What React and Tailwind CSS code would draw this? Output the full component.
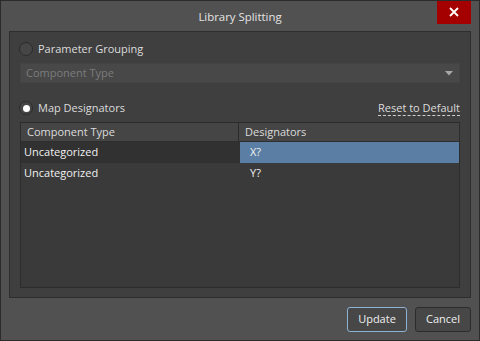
import React from "react";

const font = { fontFamily: '"Open Sans", "Noto Sans", "DejaVu Sans", sans-serif' };

function Radio({ checked }) {
  return (
    <div className="w-[14px] h-[14px] rounded-full border border-[#2c2c2c] bg-[#464646] flex items-center justify-center shrink-0">
      {checked && <div className="w-[7px] h-[7px] rounded-full bg-white" />}
    </div>
  );
}

export default function App() {
  return (
    <div
      className="w-[480px] h-[341px] bg-[#515151] border border-[#2b2b2b] flex flex-col text-[11px] text-[#dcdcdc] overflow-hidden"
      style={font}
    >
      <div className="relative h-[30px] shrink-0 flex items-center justify-center">
        <span className="text-[11.4px] text-[#e4e4e4] mt-[1px]">Library Splitting</span>
        <div className="absolute right-[8px] top-[-1px] w-[34px] h-[24px] bg-[#a50000] flex items-center justify-center">
          <svg width="10" height="10" viewBox="0 0 10 10">
            <path d="M1 1 L9 9 M9 1 L1 9" stroke="#fff" strokeWidth="1.8" />
          </svg>
        </div>
      </div>

      <div className="mx-[8px] h-[267px] border border-[#2e2e2e] bg-[#3f3f3f] flex flex-col px-[10px] shrink-0">
        <div className="h-[20px] mt-[7px] flex items-center gap-[5px] ml-[-1px]">
          <Radio />
          <span>Parameter Grouping</span>
        </div>
        <div className="mt-[4px] h-[20px] bg-[#484848] border border-[#444] rounded-[1px] flex items-center justify-between px-[5px] text-[#7c7c7c]">
          <span>Component Type</span>
          <svg width="8" height="5" viewBox="0 0 8 5" className="mr-[1px]">
            <path d="M0 0 L8 0 L4 4.5 Z" fill="#a8a8a8" />
          </svg>
        </div>
        <div className="mt-[15px] h-[20px] flex items-center justify-between">
          <div className="flex items-center gap-[5px] ml-[-1px]">
            <Radio checked />
            <span>Map Designators</span>
          </div>
          <span className="border-b border-dashed border-[#cfcfcf] leading-[14px] mt-[1px]">Reset to Default</span>
        </div>
        <div className="mt-[4px] h-[166px] border border-[#2c2c2c] bg-[#3a3a3a] flex flex-col">
          <div className="h-[19px] bg-[#454545] border-b border-[#2e2e2e] flex shrink-0">
            <div className="w-[218px] border-r border-[#2a2a2a] flex items-center pl-[6px]">Component Type</div>
            <div className="flex-1 flex items-center pl-[6px]">Designators</div>
          </div>
          <div className="h-[21px] flex">
            <div className="w-[219px] bg-[#313131] flex items-center pl-[3px] text-[#f0f0f0]">Uncategorized</div>
            <div className="flex-1 bg-[#5b7ea4] flex items-center pl-[10px] text-[#f0f0f0]">X?</div>
          </div>
          <div className="h-[20px] flex">
            <div className="w-[219px] flex items-center pl-[3px] text-[#f0f0f0]">Uncategorized</div>
            <div className="flex-1 flex items-center pl-[10px] text-[#f0f0f0]">Y?</div>
          </div>
        </div>
      </div>

      <div className="flex justify-end gap-[8px] pr-[8px] mt-[9px]">
        <div className="w-[60px] h-[25px] rounded-[3px] border border-[#8cb2d4] bg-[#474747] flex items-center justify-center text-[#f0f0f0]">
          Update
        </div>
        <div className="w-[56px] h-[25px] rounded-[3px] border border-[#2c2c2c] bg-[#474747] flex items-center justify-center text-[#f0f0f0]">
          Cancel
        </div>
      </div>
    </div>
  );
}
